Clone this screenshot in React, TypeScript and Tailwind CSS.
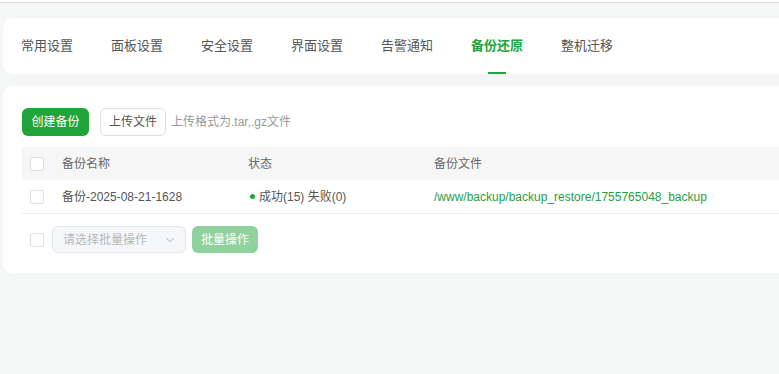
import { ChevronDown } from 'lucide-react';

const TABS = ['常用设置', '面板设置', '安全设置', '界面设置', '告警通知', '备份还原', '整机迁移'];
const ACTIVE = '备份还原';

function Checkbox() {
  return <span className="block h-[14px] w-[14px] rounded-[2px] border border-[#dcdfe6] bg-white" />;
}

export default function App() {
  return (
    <div
      className="h-[374px] w-[779px] overflow-hidden bg-[#f5f6f6]"
      style={{ fontFamily: '"Liberation Sans", "Noto Sans CJK SC", sans-serif' }}
    >
      <div className="h-[2px] bg-white" />
      <div className="h-px bg-[#dcdcdc]" />

      <div className="w-[820px] pl-[3px] pt-[15px]">
        {/* tabs card */}
        <div className="flex h-[56px] items-stretch gap-[38px] rounded-l-[10px] bg-white pl-[18px]">
          {TABS.map((t) => (
            <div key={t} className="relative flex items-center">
              <span
                className={
                  t === ACTIVE
                    ? 'text-[13px] font-bold text-[#20a53a]'
                    : 'text-[13px] text-[#555]'
                }
              >
                {t}
              </span>
              {t === ACTIVE && (
                <span className="absolute bottom-0 left-1/2 h-[2px] w-[18px] -translate-x-1/2 bg-[#20a53a]" />
              )}
            </div>
          ))}
        </div>

        {/* backup card */}
        <div className="mt-[12px] h-[187px] rounded-l-[10px] bg-white pl-[19px] pt-[22px]">
          <div className="flex items-center">
            <button className="h-[28px] w-[67px] rounded-[6px] bg-[#20a53a] text-[12px] text-white">
              创建备份
            </button>
            <button className="ml-[11px] h-[28px] w-[66px] rounded-[6px] border border-[#dcdfe6] bg-white text-[12px] text-[#555]">
              上传文件
            </button>
            <span className="ml-[5px] text-[12px] text-[#999]">上传格式为.tar,.gz文件</span>
          </div>

          <div className="mt-[11px]">
            <div className="flex h-[33px] items-center bg-[#f6f6f6] text-[12px] text-[#666]">
              <div className="w-[40px] pl-[8px]">
                <Checkbox />
              </div>
              <div className="w-[186px]">备份名称</div>
              <div className="w-[186px]">状态</div>
              <div>备份文件</div>
            </div>
            <div className="flex h-[34px] items-center border-b border-[#eeeeee] text-[12px] text-[#555]">
              <div className="w-[40px] pl-[8px]">
                <Checkbox />
              </div>
              <div className="w-[186px]">备份-2025-08-21-1628</div>
              <div className="flex w-[186px] items-center">
                <span className="ml-[2px] mr-[4px] h-[5px] w-[5px] rounded-full bg-[#20a53a]" />
                成功(15) 失败(0)
              </div>
              <div className="text-[#26a044]">/www/backup/backup_restore/1755765048_backup</div>
            </div>
          </div>

          <div className="mt-[12px] flex items-center pl-[8px]">
            <Checkbox />
            <div className="ml-[8px] flex h-[27px] w-[134px] items-center justify-between rounded-[6px] border border-[#e4e7ed] bg-[#f5f7fa] pl-[10px] pr-[8px]">
              <span className="text-[12px] text-[#b8b8b8]">请选择批量操作</span>
              <ChevronDown className="h-[14px] w-[14px] text-[#aaa]" strokeWidth={1.5} />
            </div>
            <button className="ml-[6px] h-[27px] w-[66px] rounded-[6px] bg-[#90d29d] text-[12px] text-white">
              批量操作
            </button>
          </div>
        </div>
      </div>
    </div>
  );
}
